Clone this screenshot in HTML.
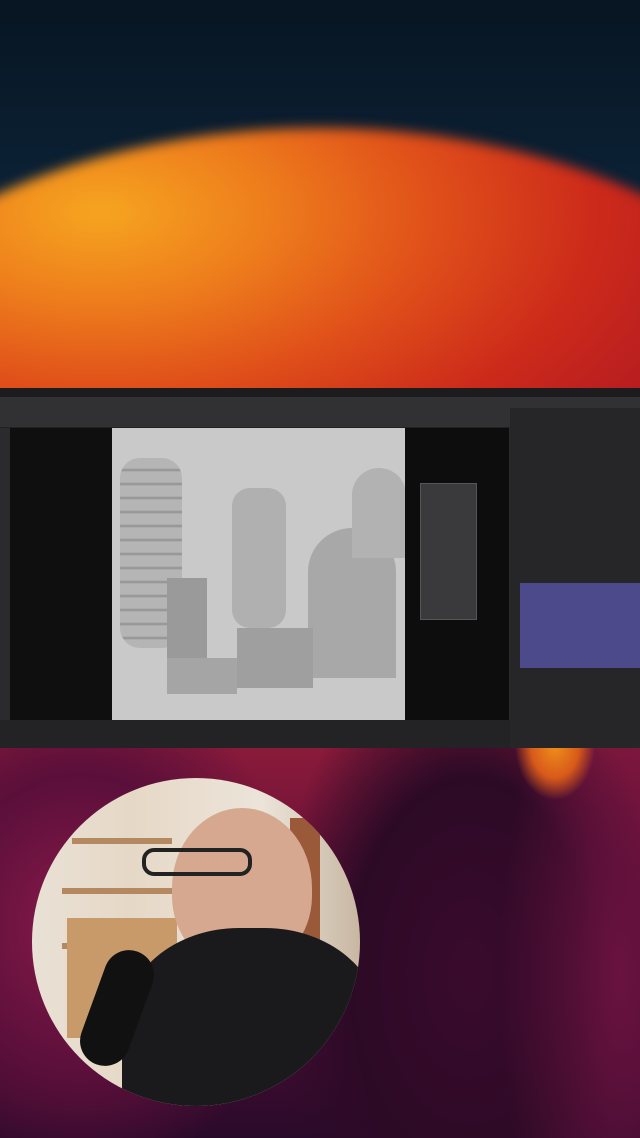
<!DOCTYPE html>
<html><head><style>
html,body{margin:0;padding:0}
body{width:640px;height:1138px;position:relative;overflow:hidden;background:#0b2236;font-family:"Liberation Sans",sans-serif}
.top{position:absolute;left:0;top:0;width:640px;height:400px;background:linear-gradient(180deg,#081522 0%,#0b2236 50%,#0e2c44 100%)}
.sun{position:absolute;left:-230px;top:128px;width:1100px;height:700px;border-radius:50%;
background:radial-gradient(ellipse 60% 50% at 30% 12%,#f6a520 0%,#ee7e1c 25%,#e0501a 50%,#cc2a1a 75%,#b31a22 100%);filter:blur(6px)}
.bottom{position:absolute;left:0;top:745px;width:640px;height:393px;background:
radial-gradient(ellipse 40px 55px at 555px 0px,#f0901a 0%,#d85a1a 60%,transparent 100%),
radial-gradient(ellipse 120px 380px at 620px 230px,#6a1240 0%,transparent 100%),
radial-gradient(ellipse 200px 330px at 470px 230px,#3a0a2c 0%,#2c0a26 60%,transparent 100%),
radial-gradient(ellipse 220px 250px at 80px 180px,#8a1a4a 0%,#5a0f3a 60%,transparent 100%),
linear-gradient(180deg,#8a1a3a 0%,#5a0e38 50%,#2a0a2a 100%)}
.win{position:absolute;left:0;top:388px;width:640px;height:360px;background:#2b2b2d}
.menubar{position:absolute;left:0;top:0;width:640px;height:9px;background:#1c1c1e}
.toolbar{position:absolute;left:0;top:9px;width:640px;height:30px;background:#313133;border-bottom:1px solid #222}
.left{position:absolute;left:10px;top:40px;width:102px;height:292px;background:#0f0f10}
.vp{position:absolute;left:112px;top:40px;width:293px;height:292px;background:#c9c9c9}
.right1{position:absolute;left:405px;top:40px;width:104px;height:292px;background:#0d0d0e}
.panel{position:absolute;left:510px;top:20px;width:130px;height:340px;background:#262628}
.list{position:absolute;left:520px;top:195px;width:120px;height:85px;background:#4c4a8a}
.tl{position:absolute;left:0;top:332px;width:510px;height:28px;background:#232325}
.menu{position:absolute;left:420px;top:95px;width:55px;height:135px;background:#3a3a3c;border:1px solid #555}
.cam{position:absolute;left:32px;top:778px;width:328px;height:328px;border-radius:50%;overflow:hidden;
background:linear-gradient(90deg,#e9e1d6 0%,#e6d8c6 30%,#ece4da 70%,#c8b7a2 100%)}
.shelf{position:absolute;background:#b48860}
.head{position:absolute;left:140px;top:30px;width:140px;height:160px;border-radius:50% 50% 45% 45%;background:#d6a890}
.body{position:absolute;left:90px;top:150px;width:260px;height:220px;border-radius:45% 45% 0 0;background:#1a1a1c}
.mic{position:absolute;left:60px;top:170px;width:50px;height:120px;border-radius:25px;background:#111;transform:rotate(20deg)}
.shape{position:absolute;background:#a9a9a9}
</style></head><body>
<div class="top"></div>
<div class="sun"></div>
<div class="bottom"></div>
<div class="win">
 <div class="menubar"></div>
 <div class="toolbar"></div>
 <div class="left"></div>
 <div class="vp">
  <div class="shape" style="left:8px;top:30px;width:62px;height:190px;border-radius:20px;background:repeating-linear-gradient(180deg,#b5b5b5 0,#b5b5b5 10px,#8f8f8f 12px,#b5b5b5 14px)"></div>
  <div class="shape" style="left:120px;top:60px;width:54px;height:140px;border-radius:18px;background:#b0b0b0"></div>
  <div class="shape" style="left:196px;top:100px;width:88px;height:150px;border-radius:44px 44px 0 0;background:#a8a8a8"></div>
  <div class="shape" style="left:240px;top:40px;width:54px;height:90px;border-radius:27px 27px 0 0;background:#b2b2b2"></div>
  <div class="shape" style="left:125px;top:200px;width:76px;height:60px;background:#9f9f9f"></div>
  <div class="shape" style="left:55px;top:230px;width:70px;height:36px;background:#a5a5a5"></div>
  <div class="shape" style="left:55px;top:150px;width:40px;height:80px;background:#9a9a9a"></div>
 </div>
 <div class="right1"></div>
 <div class="menu"></div>
 <div class="panel"></div>
 <div class="list"></div>
 <div class="tl"></div>
</div>
<div class="cam">
 <div class="shelf" style="left:40px;top:60px;width:100px;height:6px"></div>
 <div class="shelf" style="left:30px;top:110px;width:110px;height:6px"></div>
 <div class="shelf" style="left:30px;top:165px;width:110px;height:6px"></div>
 <div style="position:absolute;left:35px;top:140px;width:110px;height:120px;background:#c89a6a"></div>
 <div style="position:absolute;left:258px;top:40px;width:30px;height:200px;background:#9a5a3a"></div>
 <div class="head"></div>
 <div style="position:absolute;left:110px;top:70px;width:110px;height:28px;border:4px solid #222;border-radius:12px;box-sizing:border-box"></div>
 <div class="body"></div>
 <div class="mic"></div>
</div>
</body></html>
